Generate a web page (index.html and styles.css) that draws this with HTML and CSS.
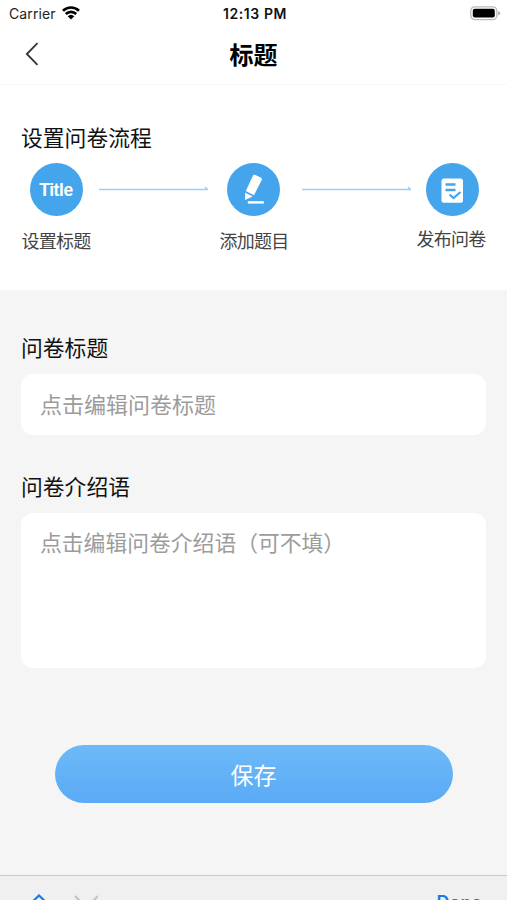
FILE: index.html
```html
<!DOCTYPE html>
<html lang="zh-CN">
	<head>
		<meta charset="utf-8">
		<meta name="viewport" content="width=device-width, initial-scale=1">
		<title>标题</title>
		<link rel="stylesheet" href="styles.css">
	</head>

	<body>
		<div class="status-bar">
			<div class="carrier">
				<span>Carrier</span>
				<svg class="wifi" width="18" height="14" viewBox="0 0 18 14">
					<path d="M1 4.8a11.4 11.4 0 0 1 16 0M3.8 8a7.4 7.4 0 0 1 10.4 0" fill="none" stroke="#000" stroke-width="2.6"/>
					<path d="M5.7 10.2a4.8 4.8 0 0 1 6.6 0L9 13.6z"/>
				</svg>
			</div>
			<div class="time">12:13 PM</div>
			<svg class="battery" width="31" height="15" viewBox="0 0 31 15">
				<rect x="0.8" y="0.8" width="26" height="12.8" rx="4" fill="#fff" stroke="#bbb" stroke-width="1.3"/>
				<rect x="2.8" y="2.8" width="22" height="8.8" rx="2"/>
				<path d="M28.2 4.9v4.6q2-1 2-2.3t-2-2.3z" fill="#aaa"/>
			</svg>
		</div>

		<header class="nav">
			<svg class="back" width="14" height="24" viewBox="0 0 14 24">
				<path d="M12.5 1.2L1.8 12l10.7 10.8" fill="none" stroke="#333" stroke-width="1.8"/>
			</svg>
			<h1>标题</h1>
		</header>

		<section class="process">
			<h2>设置问卷流程</h2>
			<div class="steps">
				<div class="step">
					<div class="circle">Title</div>
					<div class="label">设置标题</div>
				</div>
				<svg class="arrow" width="110" height="6" viewBox="0 0 110 6">
					<path d="M0 3.5h109M106 1l2.5 2.5" fill="none" stroke="#9bcff5" stroke-width="1.4"/>
				</svg>
				<div class="step middle">
					<div class="circle">
						<svg width="53" height="53" viewBox="0 0 53 53" fill="#fff">
							<path d="M25.8 12q.8-1.700 2.600-1l5.300 2.500q1.800.8 1 2.500L27 31.300 18.800 27z"/>
							<path d="M18.200 28.600l7.500 3.900-7.700 3.600z"/>
							<rect x="20.800" y="37.200" width="16" height="2.400"/>
						</svg>
					</div>
					<div class="label">添加题目</div>
				</div>
				<svg class="arrow" width="110" height="6" viewBox="0 0 110 6">
					<path d="M0 3.5h109M106 1l2.5 2.5" fill="none" stroke="#9bcff5" stroke-width="1.4"/>
				</svg>
				<div class="step last">
					<div class="circle">
						<svg width="53" height="53" viewBox="0 0 53 53">
							<rect x="15.5" y="14.5" width="21.5" height="24.2" rx="2.5" fill="#fff"/>
							<path d="M19.500 20.500h10M19.500 26h10M23.500 30.500l4 3.500 7-6" fill="none" stroke="#45a5ec" stroke-width="2.3"/>
						</svg>
					</div>
					<div class="label">发布问卷</div>
				</div>
			</div>
		</section>

		<form class="form">
			<label for="title">问卷标题</label>
			<input type="text" id="title" placeholder="点击编辑问卷标题">
			<label for="intro">问卷介绍语</label>
			<textarea id="intro" placeholder="点击编辑问卷介绍语（可不填）"></textarea>
			<button type="button" class="save">保存</button>
		</form>

		<!-- keyboard accessory bar, cut off by the bottom of the screen -->
		<div class="keyboard-bar">
			<svg class="arrows" width="72" height="16" viewBox="0 0 72 16" fill="none" stroke-width="2.2">
				<path d="M1 13L13 1.5 25 13" stroke="#1a7be8"/>
				<path d="M49 2l11.500 11.500L72 2" stroke="#c4c4c6"/>
			</svg>
			<span class="done">Done</span>
		</div>
	</body>
</html>
```
FILE: styles.css
```css
* {
	box-sizing: border-box;
}

html, body {
	height: 100%;
	margin: 0;
	padding: 0;
}

body {
	display: flex;
	flex-direction: column;
	height: 900px;
	overflow: hidden;
	background: #f5f5f5;
	color: #111;
	font-family: "Liberation Sans", "Noto Sans CJK SC", sans-serif;
}

.status-bar {
	display: grid;
	grid-template-columns: 1fr auto 1fr;
	align-items: center;
	flex: none;
	height: 27px;
	padding: 0 6px 0 9px;
	background: #fff;
	font-family: Inter, sans-serif;
	font-size: 14px;
}

.carrier {
	display: flex;
	align-items: center;
	gap: 6px;
	color: #222;
	letter-spacing: 0.1px;
}

.wifi {
	margin-top: -2px;
}

.time {
	font-size: 14px;
	font-weight: 600;
	letter-spacing: 0.6px;
}

.battery {
	justify-self: end;
}

.nav {
	display: grid;
	grid-template-columns: 1fr auto 1fr;
	align-items: center;
	flex: none;
	height: 58px;
	padding: 0 25px;
	background: #fff;
	border-bottom: 1px solid #f7f7f7;
}

.back {
	margin-top: -3px;
}

.nav h1 {
	margin: 0;
	color: #000;
	font-size: 24px;
	font-weight: 700;
	line-height: 54px;
}

.process {
	flex: none;
	height: 205px;
	padding: 38px 20px 0 21px;
	background: #fff;
}

.process h2 {
	margin: 0;
	font-size: 21.8px;
	font-weight: 400;
	line-height: 32px;
}

.steps {
	display: flex;
	justify-content: space-between;
	margin-top: 8px;
}

.step {
	display: flex;
	flex-direction: column;
	align-items: center;
	width: 70px;
}

.circle {
	display: flex;
	align-items: center;
	justify-content: center;
	width: 53px;
	height: 53px;
	padding-top: 1px;
	border-radius: 50%;
	background: #45a5ec;
	color: #fff;
	font-size: 17.5px;
	font-weight: 700;
	letter-spacing: -0.4px;
}

.circle svg {
	flex: none;
}

.middle .circle {
	margin-left: -2px;
}

.label {
	margin-top: 13px;
	color: #444;
	font-size: 18px;
	letter-spacing: -0.8px;
	line-height: 26px;
	white-space: nowrap;
}

.last .label {
	margin-top: 11px;
	margin-left: -2px;
}

.arrow {
	margin: 23px -4px 0 4px;
}

.step:first-child + .arrow {
	margin: 23px 1px 0 -1px;
}

.form {
	display: flex;
	flex-direction: column;
	flex: 1;
	padding: 43px 21px 0;
}

.form label {
	font-size: 21.8px;
	line-height: 32px;
}

.form input,
.form textarea {
	width: 100%;
	margin: 9px 0 37px;
	padding: 2px 18px 0 19px;
	border: none;
	border-radius: 12px;
	outline: none;
	background: #fff;
	font-family: inherit;
	font-size: 22px;
	line-height: 32px;
	resize: none;
}

.form input {
	height: 61px;
}

.form textarea {
	height: 155px;
	margin-bottom: 77px;
	padding-top: 15px;
	font-size: 21.8px;
}

.form input::placeholder,
.form textarea::placeholder {
	color: #9c9c9c;
}

.save {
	align-self: center;
	width: 398px;
	height: 58px;
	padding: 0;
	border: none;
	border-radius: 29px;
	background: linear-gradient(#6db9f8, #5aaaf5);
	color: #fff;
	font-family: inherit;
	font-size: 23px;
}

.keyboard-bar {
	display: flex;
	align-items: flex-start;
	justify-content: space-between;
	flex: none;
	height: 25px;
	padding: 18px 25px 0 26px;
	border-top: 1px solid #c8c8c8;
	background: #f0f0f0;
	overflow: hidden;
}

.done {
	margin-top: -2px;
	color: #1a7be8;
	font-family: Inter, sans-serif;
	font-size: 18px;
	font-weight: 600;
	line-height: 22px;
}
```
